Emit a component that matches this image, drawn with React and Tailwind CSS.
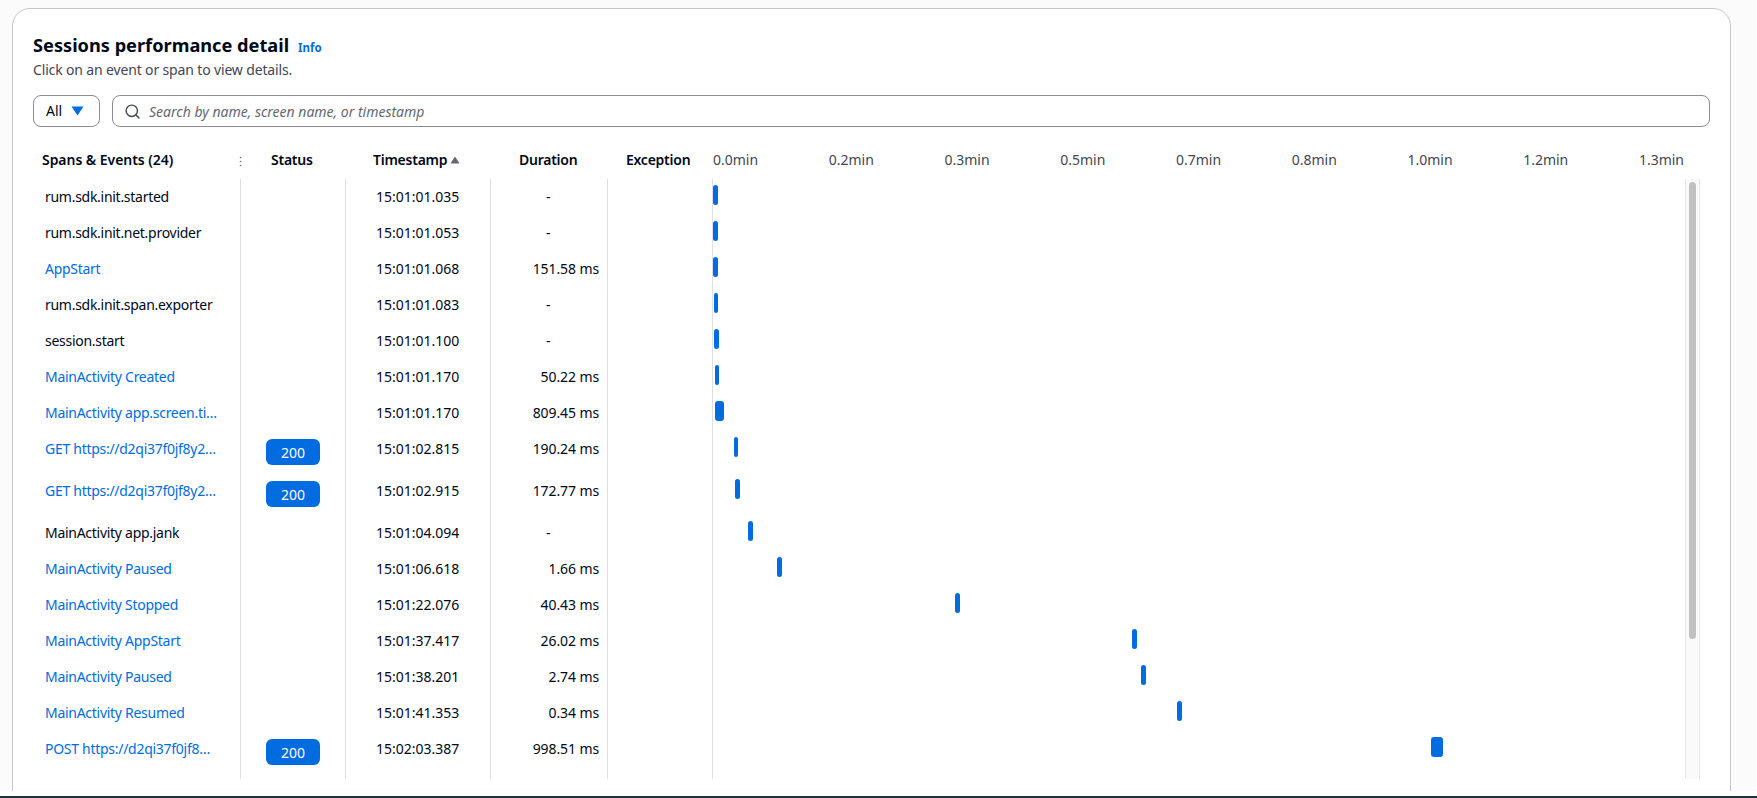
import { Search } from 'lucide-react';

const AXIS = ['0.0min', '0.2min', '0.3min', '0.5min', '0.7min', '0.8min', '1.0min', '1.2min', '1.3min'];

// left = offset from the timeline column's line, in px
const ROWS = [
  { name: 'rum.sdk.init.started', time: '15:01:01.035', duration: '-', left: 0, width: 5 },
  { name: 'rum.sdk.init.net.provider', time: '15:01:01.053', duration: '-', left: 0, width: 5 },
  { name: 'AppStart', link: true, time: '15:01:01.068', duration: '151.58 ms', left: 0, width: 5 },
  { name: 'rum.sdk.init.span.exporter', time: '15:01:01.083', duration: '-', left: 1, width: 4 },
  { name: 'session.start', time: '15:01:01.100', duration: '-', left: 1, width: 5 },
  { name: 'MainActivity Created', link: true, time: '15:01:01.170', duration: '50.22 ms', left: 2, width: 4 },
  { name: 'MainActivity app.screen.ti…', link: true, time: '15:01:01.170', duration: '809.45 ms', left: 2, width: 9 },
  { name: 'GET https://d2qi37f0jf8y2…', link: true, status: 200, time: '15:01:02.815', duration: '190.24 ms', left: 21, width: 4 },
  { name: 'GET https://d2qi37f0jf8y2…', link: true, status: 200, time: '15:01:02.915', duration: '172.77 ms', left: 22, width: 5 },
  { name: 'MainActivity app.jank', time: '15:01:04.094', duration: '-', left: 35, width: 5 },
  { name: 'MainActivity Paused', link: true, time: '15:01:06.618', duration: '1.66 ms', left: 64, width: 5 },
  { name: 'MainActivity Stopped', link: true, time: '15:01:22.076', duration: '40.43 ms', left: 242, width: 5 },
  { name: 'MainActivity AppStart', link: true, time: '15:01:37.417', duration: '26.02 ms', left: 419, width: 5 },
  { name: 'MainActivity Paused', link: true, time: '15:01:38.201', duration: '2.74 ms', left: 428, width: 5 },
  { name: 'MainActivity Resumed', link: true, time: '15:01:41.353', duration: '0.34 ms', left: 464, width: 5 },
  { name: 'POST https://d2qi37f0jf8…', link: true, status: 200, time: '15:02:03.387', duration: '998.51 ms', left: 718, width: 12 },
];

function Row({ row }) {
  const isDash = row.duration === '-';
  return (
    <div className={`flex ${row.status ? 'h-[42px]' : 'h-[36px]'}`}>
      <div className="w-[207px] shrink-0 pl-[12px] pt-[7px] leading-[22px] tracking-[-0.28px]">
        <div className={`whitespace-nowrap ${row.link ? 'text-[#006ce0]' : 'text-[#000716]'}`}>{row.name}</div>
      </div>
      <div className="w-[105px] shrink-0 border-l border-[#dedee3] pl-[25px] pt-[8px]">
        {row.status && (
          <span className="flex h-[26px] w-[54px] items-center justify-center rounded-[6px] bg-[#006ce0] pt-[1px] text-white">
            {row.status}
          </span>
        )}
      </div>
      <div className="w-[145px] shrink-0 border-l border-[#dedee3] pl-[30px] pt-[7px] leading-[22px] text-[#000716]">{row.time}</div>
      <div className={`w-[117px] shrink-0 border-l border-[#dedee3] pt-[7px] leading-[22px] text-[#000716] ${isDash ? 'pl-[55px]' : 'pr-[8px] text-right tracking-[-0.1px]'}`}>
        {row.duration}
      </div>
      <div className="w-[105px] shrink-0 border-l border-[#dedee3]" />
      <div className="flex-1 border-l border-[#dedee3] pt-[6px]">
        <div className="h-[20px] rounded-[3px] bg-[#006ce0]" style={{ marginLeft: row.left, width: row.width }} />
      </div>
    </div>
  );
}

export default function App() {
  return (
    <div className="flex h-[798px] flex-col overflow-hidden bg-[#fbfbfb] font-['Noto_Sans',sans-serif] text-[14px] text-[#000716]">
      <div className="min-h-0 flex-1 overflow-hidden pl-[12px] pr-[26px] pt-[8px]">
        <div className="h-[820px] rounded-[18px] border border-[#c6c6cd] bg-white pl-[20px] pr-[20px] pt-[23px]">
          <div className="flex items-baseline gap-[9px]">
            <h1 className="text-[18.2px] font-bold leading-[26px]">Sessions performance detail</h1>
            <a className="text-[11.5px] font-bold text-[#006ce0]">Info</a>
          </div>
          <p className="mt-[2px] text-[14px] leading-[20px] tracking-[-0.15px] text-[#424650]">Click on an event or span to view details.</p>

          <div className="mt-[15px] flex gap-[12px]">
            <button className="flex h-[32px] w-[67px] items-center rounded-[8px] border border-[#8c8c94] pl-[12px] leading-[20px]">
              All
              <svg className="ml-[9px]" width="13" height="10" viewBox="0 0 13 10">
                <path d="M0.5 0.5h12L6.5 9.5z" fill="#006ce0" />
              </svg>
            </button>
            <div className="flex h-[32px] flex-1 items-center rounded-[8px] border border-[#8c8c94] pl-[11px]">
              <Search size={17} strokeWidth={2} className="text-[#424650]" />
              <span className="ml-[8px] italic text-[#656871]">Search by name, screen name, or timestamp</span>
            </div>
          </div>

          <div className="mt-[13px] w-[1667px]">
            <div className="flex h-[39px] items-center font-semibold tracking-[-0.25px]">
              <div className="relative w-[207px] shrink-0 pl-[9px] tracking-[-0.05px]">
                Spans & Events (24)
                <svg className="absolute left-[206px] top-[7px]" width="3" height="11" viewBox="0 0 3 11">
                  <circle cx="1.5" cy="1.5" r="0.8" fill="#656871" />
                  <circle cx="1.5" cy="5.5" r="0.8" fill="#656871" />
                  <circle cx="1.5" cy="9.5" r="0.8" fill="#656871" />
                </svg>
              </div>
              <div className="w-[105px] shrink-0 pl-[31px]">Status</div>
              <div className="flex w-[145px] shrink-0 items-center pl-[28px]">
                Timestamp
                <svg className="ml-[3px]" width="10" height="8" viewBox="0 0 10 8">
                  <path d="M5 0.5L9.5 7.5H0.5z" fill="#656871" />
                </svg>
              </div>
              <div className="w-[117px] shrink-0 pl-[29px]">Duration</div>
              <div className="w-[105px] shrink-0 pl-[19px]">Exception</div>
              <div className="flex flex-1 justify-between pl-[1px] pr-[16px] font-normal tracking-normal text-[#424650]">
                {AXIS.map(label => (
                  <span key={label}>{label}</span>
                ))}
              </div>
            </div>

            <div className="flex h-[600px]">
              <div className="h-[600px] min-w-0 flex-1 overflow-hidden">
                {ROWS.map((row, i) => (
                  <Row key={i} row={row} />
                ))}
                <div className="flex h-[27px]">
                  <div className="w-[207px]" />
                  <div className="w-[105px] border-l border-[#dedee3]" />
                  <div className="w-[145px] border-l border-[#dedee3]" />
                  <div className="w-[117px] border-l border-[#dedee3]" />
                  <div className="w-[105px] border-l border-[#dedee3]" />
                  <div className="flex-1 border-l border-[#dedee3]" />
                </div>
              </div>
              <div className="w-[15px] shrink-0 border-x border-[#e8e8e8] bg-[#fafafa] px-[3px] pt-[3px]">
                <div className="h-[457px] rounded-full bg-[#c1c1c1]" />
              </div>
            </div>
          </div>
        </div>
      </div>
      <div className="h-[5px] bg-white" />
      <div className="h-[2px] bg-[#232f3e]" />
    </div>
  );
}
